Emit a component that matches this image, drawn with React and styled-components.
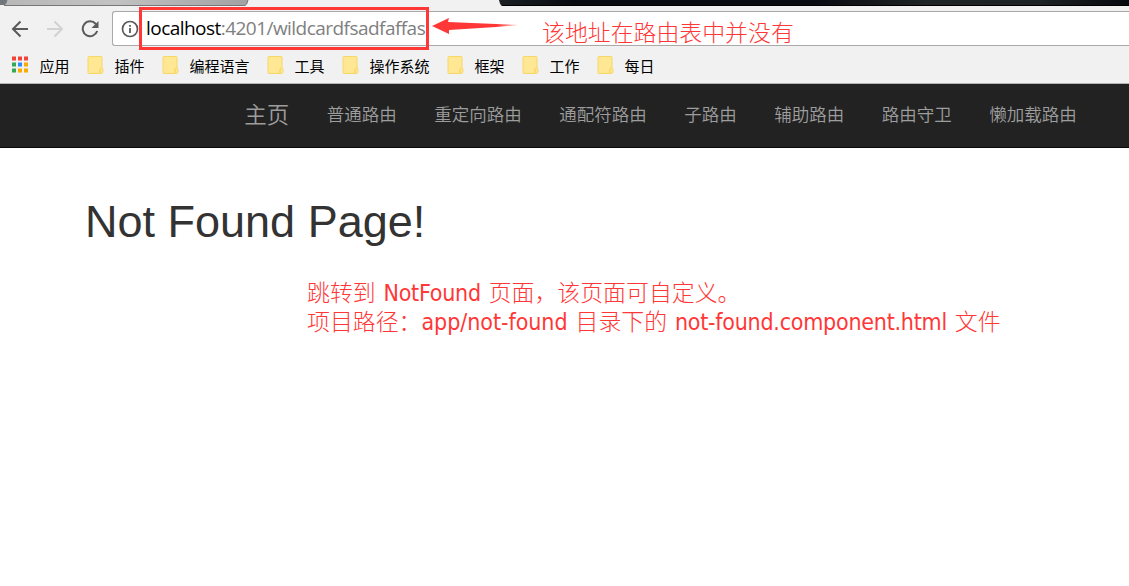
import React from 'react';
import styled, { createGlobalStyle } from 'styled-components';

const GlobalStyle = createGlobalStyle`
  * { box-sizing: border-box; }
  body { margin: 0; background: #fff; overflow: hidden; }
`;

const cjk = '"Noto Sans CJK SC", sans-serif';

const Window = styled.div`
  position: relative;
  width: 1129px;
  height: 586px;
  background: #fff;
  overflow: hidden;
  font-family: ${cjk};
`;

const TabStrip = styled.svg`
  display: block;
  width: 1129px;
  height: 6px;
`;

const Toolbar = styled.div`
  display: flex;
  align-items: flex-start;
  height: 43px;
  padding: 5px 0 0 11px;
  background: #f1f1f1;
`;

const ToolIcon = styled.svg`
  display: block;
  flex: none;
  width: 18px;
  height: 18px;
  margin: 9px 17px 0 0;
  fill: none;
  stroke: ${(p) => (p.$muted ? '#d2d2d2' : '#5a5a5a')};
  stroke-width: 2;
`;

const Omnibox = styled.div`
  flex: 1;
  display: flex;
  align-items: center;
  height: 35px;
  margin-left: -4px;
  padding-left: 8px;
  border: 1px solid #a9a9a9;
  border-right: 0;
  border-radius: 3px 0 0 3px;
  background: #fff;
`;

const InfoIcon = styled.svg`
  width: 18px;
  height: 18px;
  flex: none;
  margin-right: 7px;
`;

const Url = styled.span`
  font: 19px/33px "Open Sans", sans-serif;
  letter-spacing: -0.54px;
  color: ${(p) => (p.$host ? '#000' : '#808080')};
  white-space: pre;
`;

const BookmarkBar = styled.div`
  display: flex;
  align-items: center;
  height: 35px;
  padding: 0 0 0 11px;
  background: #f1f1f1;
  border-bottom: 1px solid #b3b3b3;
`;

const Bookmark = styled.div`
  display: flex;
  align-items: center;
  height: 34px;
  margin-right: 17.5px;
  font-size: 15px;
  line-height: 34px;
  color: #000;
  white-space: nowrap;
`;

const AppsIcon = styled.svg`
  width: 18px;
  height: 18px;
  margin: -3px 10.5px 0 0;
`;

const FolderIcon = styled.svg`
  width: 17px;
  height: 20px;
  margin: -2px 10.5px 0 0;
`;

const Navbar = styled.nav`
  display: flex;
  align-items: flex-start;
  height: 64px;
  padding-left: 225.5px;
  background: #222;
  border-bottom: 1px solid #080808;
`;

const NavItem = styled.a`
  padding: 0 18.75px;
  font-size: ${(p) => (p.$brand ? '22.5px' : '17.5px')};
  font-weight: 350;
  line-height: ${(p) => (p.$brand ? '58px' : '59px')};
  color: #9d9d9d;
  white-space: nowrap;
`;

const Content = styled.main`
  padding: 49px 0 0 85px;
`;

const Title = styled.h1`
  margin: 0;
  font: 400 45px/50px "Liberation Sans", Arial, sans-serif;
  color: #333;
`;

const Note = styled.div`
  margin: 30px 0 0 222px;
  font-family: ${cjk};
  font-size: 22.9px;
  font-weight: 300;
  line-height: 29px;
  color: #ff3737;
  white-space: pre;
`;

const NoteLine = styled.p`
  margin: 0;
  height: 29px;
`;

const Latin = styled.span`
  font-family: "DejaVu Sans Condensed", "DejaVu Sans", sans-serif;
  font-size: 23px;
  font-stretch: condensed;
  font-weight: 400;
  letter-spacing: ${(p) => (p.$loose ? '-0.04px' : '-0.25px')};
  word-spacing: 1.5px;
`;

const Highlight = styled.div`
  position: absolute;
  left: 139px;
  top: 7px;
  width: 290px;
  height: 43px;
  border: 3px solid #ff3737;
`;

const Arrow = styled.svg`
  position: absolute;
  left: 430px;
  top: 14px;
  width: 90px;
  height: 22px;
`;

const UrlNote = styled.div`
  position: absolute;
  left: 542px;
  top: 16px;
  font: 300 22.9px/30px ${cjk};
  color: #ff3737;
  white-space: nowrap;
`;

const bookmarks = ['插件', '编程语言', '工具', '操作系统', '框架', '工作', '每日'];
const links = ['普通路由', '重定向路由', '通配符路由', '子路由', '辅助路由', '路由守卫', '懒加载路由'];
const dots = ['#f44336', '#f44336', '#f44336', '#34a853', '#2f8cff', '#f9ab00', '#34a853', '#f9ab00', '#f9ab00'];

function Folder() {
  return (
    <FolderIcon viewBox="0 0 17 20">
      <path d="M2 1.500h12q1 0 1 1v10.500q1 .5 1 2v1.500q0 2-2 2H2q-1 0-1-1v-15q0-1 1-1z" fill="#ffe793" stroke="#f8d767" />
      <path d="M13 18v-3.500q0-1.200 1.500-1.500" fill="none" stroke="#f5cf50" />
    </FolderIcon>
  );
}

export default function App() {
  return (
    <Window>
      <GlobalStyle />
      <TabStrip viewBox="0 0 1129 6">
        <defs>
          <linearGradient id="strip">
            <stop offset="0" stopColor="#1b2025" />
            <stop offset="0.12" stopColor="#080c10" />
            <stop offset="0.5" stopColor="#080c10" />
            <stop offset="0.68" stopColor="#1f2427" />
            <stop offset="0.86" stopColor="#1d2225" />
            <stop offset="1" stopColor="#06090d" />
          </linearGradient>
          <linearGradient id="tab">
            <stop offset="0" stopColor="#b8b8b8" />
            <stop offset="0.45" stopColor="#c2c2c2" />
            <stop offset="1" stopColor="#a2a2a2" />
          </linearGradient>
        </defs>
        <rect width="1129" height="6" fill="#f1f1f1" />
        <path d="M0 0h7L5 5H0z" fill="#70767a" />
        <path d="M7 0h241q-1 5-3 5.500H4q2-1 3-5.500z" fill="url(#tab)" />
        <path d="M7 0q-1 5-3 5.500h241q2-.5 3-5.500" fill="none" stroke="#777" />
        <path d="M499 0h630v6H502q-2-1-3-6z" fill="url(#strip)" />
        <path d="M502 5.500h627" stroke="#000" />
      </TabStrip>
      <Toolbar>
        <ToolIcon viewBox="0 0 18 18"><path d="M17 9H2.500M9.500 1.500L2 9l7.500 7.500" /></ToolIcon>
        <ToolIcon $muted viewBox="0 0 18 18"><path d="M1 9h14.500M8.500 1.500L16 9l-7.500 7.500" /></ToolIcon>
        <ToolIcon viewBox="0 0 18 18">
          <path d="M14.800 4A7.400 7.400 0 1 0 16.200 11" />
          <path d="M17.500 1v7h-7z" fill="#5a5a5a" stroke="none" />
        </ToolIcon>
        <Omnibox>
          <InfoIcon viewBox="0 0 18 18">
            <circle cx="9" cy="9" r="7.500" fill="none" stroke="#5a5a5a" strokeWidth="1.700" />
            <path d="M9 8v5M9 5v1.800" stroke="#5a5a5a" strokeWidth="1.800" />
          </InfoIcon>
          <Url $host>localhost</Url>
          <Url>:4201/wildcardfsadfaffas</Url>
        </Omnibox>
      </Toolbar>
      <BookmarkBar>
        <Bookmark>
          <AppsIcon viewBox="0 0 18 18">
            {dots.map((c, i) => (
              <rect key={i} x={1 + (i % 3) * 6} y={0.5 + Math.floor(i / 3) * 6} width="4" height="4" fill={c} />
            ))}
          </AppsIcon>
          应用
        </Bookmark>
        {bookmarks.map((name) => (
          <Bookmark key={name}><Folder />{name}</Bookmark>
        ))}
      </BookmarkBar>
      <Navbar>
        <NavItem $brand>主页</NavItem>
        {links.map((name) => <NavItem key={name}>{name}</NavItem>)}
      </Navbar>
      <Content>
        <Title>Not Found Page!</Title>
        <Note>
          <NoteLine>跳转到<Latin>{' NotFound '}</Latin>页面，该页面可自定义。</NoteLine>
          <NoteLine>项目路径：<Latin $loose>{'app/not-found '}</Latin>目录下的<Latin>{' not-found.component.html '}</Latin>文件</NoteLine>
        </Note>
      </Content>
      <Highlight />
      <Arrow viewBox="0 0 90 22">
        <defs>
          <linearGradient id="tail">
            <stop offset="0.75" stopColor="#ff3737" />
            <stop offset="1" stopColor="#ff3737" stopOpacity="0.200" />
          </linearGradient>
        </defs>
        <path d="M2 12L19 4L18 8L66 10L89 11L66 13L19 16V20z" fill="url(#tail)" />
      </Arrow>
      <UrlNote>该地址在路由表中并没有</UrlNote>
    </Window>
  );
}
